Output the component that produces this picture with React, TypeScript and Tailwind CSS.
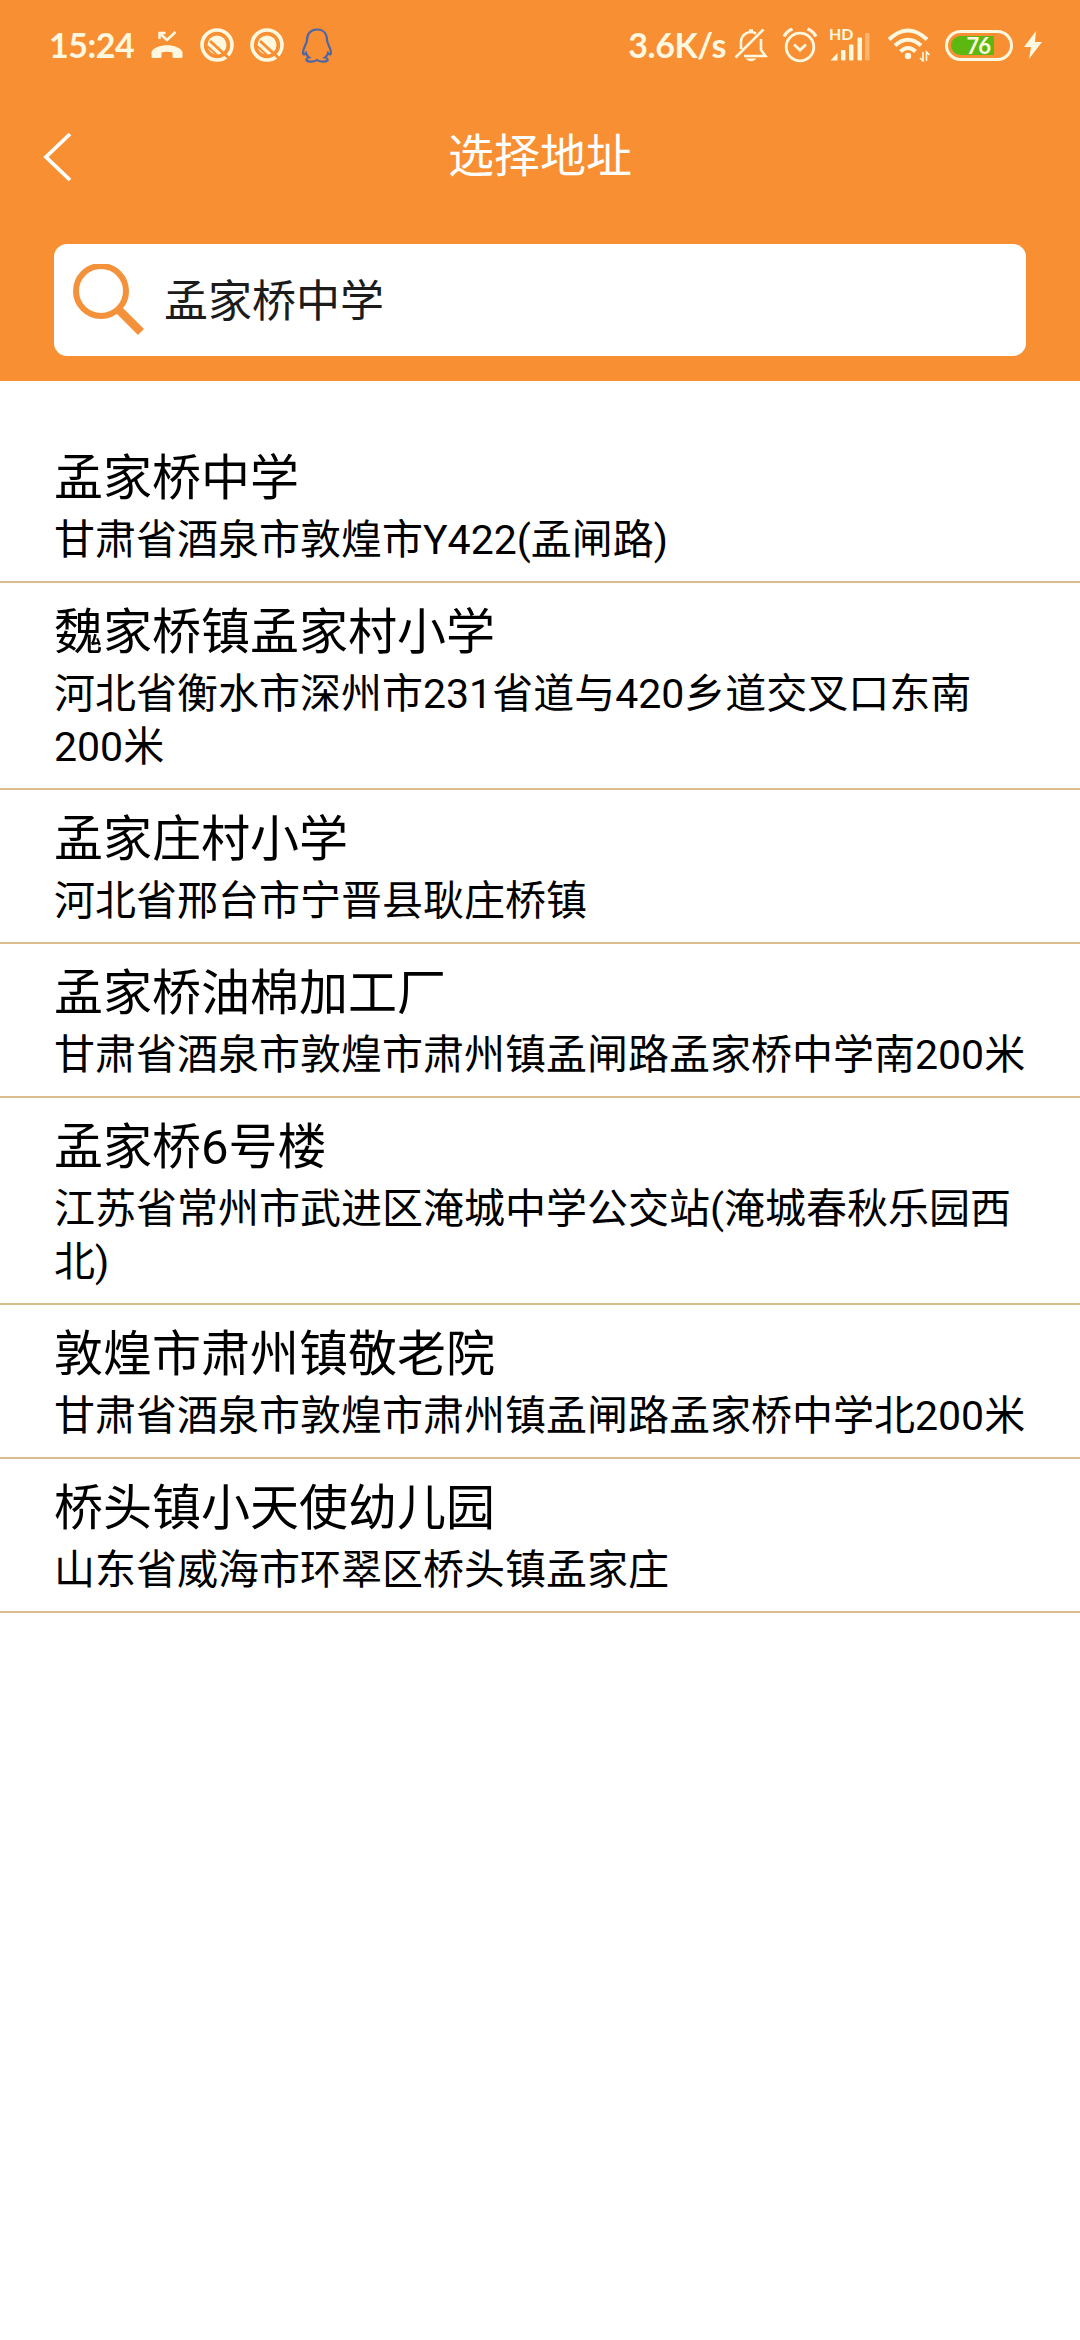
const addresses = [
  { name: '孟家桥中学', detail: '甘肃省酒泉市敦煌市Y422(孟闸路)' },
  { name: '魏家桥镇孟家村小学', detail: '河北省衡水市深州市231省道与420乡道交叉口东南200米' },
  { name: '孟家庄村小学', detail: '河北省邢台市宁晋县耿庄桥镇' },
  { name: '孟家桥油棉加工厂', detail: '甘肃省酒泉市敦煌市肃州镇孟闸路孟家桥中学南200米' },
  { name: '孟家桥6号楼', detail: '江苏省常州市武进区淹城中学公交站(淹城春秋乐园西北)' },
  { name: '敦煌市肃州镇敬老院', detail: '甘肃省酒泉市敦煌市肃州镇孟闸路孟家桥中学北200米' },
  { name: '桥头镇小天使幼儿园', detail: '山东省威海市环翠区桥头镇孟家庄' },
]

function MissedCallIcon() {
  return (
    <svg className="ml-[17px] h-[28px] w-[34px]" viewBox="0 0 34 28" fill="none">
      <path d="M9.500 1v7M8.500 2h7M10 2.500l7 6.500L25.500 1" stroke="currentColor" strokeWidth="2.500" />
      <path d="M1.500 21C5 12 29 12 32.500 21v4.500q0 1.500-1.500 1.500h-7q-1.500 0-1.500-1.500v-4q-5.500-1.500-11 0v4q0 1.500-1.500 1.500H3q-1.500 0-1.500-1.500z" fill="currentColor" />
    </svg>
  )
}

function NoSignIcon() {
  return (
    <svg className="ml-[16px] size-[34px]" viewBox="0 0 34 34" fill="none">
      <circle cx="17" cy="17" r="15" stroke="currentColor" strokeWidth="3.600" />
      <circle cx="17" cy="17" r="9.500" fill="currentColor" />
      <path d="M10 13L31 32" stroke="#f88f32" strokeWidth="3" />
      <path d="M7 18l10 9" stroke="#f88f32" strokeWidth="2" />
    </svg>
  )
}

function PenguinIcon() {
  return (
    <svg className="ml-[17px] h-[35px] w-[32px]" viewBox="0 0 32 35" fill="none">
      <path
        d="M16 1.500C9.500 1.500 6 6 6 12c0 4-4 7-4 13 0 2 1.500 2 3 0 .5 2 1.500 3.500 3 4.500-2 .5-3 1.500-2.500 3 2 1.500 8 1.500 10.500-.5 2.500 2 8.500 2 10.500.5.5-1.500-.5-2.500-2.500-3 1.500-1 2.500-2.500 3-4.500 1.500 2 3 2 3 0 0-6-4-9-4-13 0-6-3.500-10.500-10-10.500z"
        stroke="#4d66a8"
        strokeWidth="2.200"
      />
    </svg>
  )
}

function MutedBellIcon() {
  return (
    <svg className="ml-[8px] h-[34px] w-[34px]" viewBox="0 0 34 34" fill="none" stroke="currentColor" strokeWidth="2.600">
      <path d="M7 21V14a10 10 0 0 1 15-8.500M27 11v11l4.500 6H10" />
      <path d="M1.500 29.500L29.500 1.500" />
      <path d="M12.500 31q5 3.500 9 0z" fill="currentColor" strokeWidth="1" />
      <path d="M15 2.500h4" />
    </svg>
  )
}

function AlarmIcon() {
  return (
    <svg className="ml-[14px] h-[36px] w-[36px]" viewBox="0 0 36 36" fill="none" stroke="currentColor">
      <circle cx="18" cy="20" r="13.800" strokeWidth="2.800" />
      <path d="M12 17.500l6 5.500 6-5.500" strokeWidth="2.800" />
      <path d="M2 9.500Q5 4 10.500 2M34 9.500Q31 4 25.500 2" strokeWidth="3.400" />
    </svg>
  )
}

function SignalIcon() {
  return (
    <div className="relative ml-[11px] h-[34px] w-[42px]">
      <span className="absolute -top-[3px] left-0 text-[16px] leading-[18px]">HD</span>
      <svg className="size-full" viewBox="0 0 42 34" fill="currentColor">
        <path d="M1.500 32.500h7V25z" />
        <rect x="12" y="22" width="4.500" height="10.500" rx="1" />
        <rect x="20" y="16.500" width="4.500" height="16" rx="1" />
        <rect x="28.500" y="9.500" width="4.500" height="23" rx="1" />
        <rect x="36" y="5" width="4.500" height="27.500" rx="1" opacity=".35" />
      </svg>
    </div>
  )
}

function WifiIcon() {
  return (
    <svg className="ml-[16px] h-[34px] w-[43px]" viewBox="0 0 43 34" fill="none" stroke="currentColor">
      <path d="M2 11.500Q21 -6.500 40 11.500" strokeWidth="4" />
      <path d="M8 17.500Q21 6 34 17.500" strokeWidth="4" />
      <path d="M13.500 23.500Q21 16.500 28.500 23.500" strokeWidth="4" />
      <circle cx="21" cy="28" r="3.200" fill="currentColor" stroke="none" />
      <path d="M36 24v9l-3-3M39.500 33v-9l3 3" strokeWidth="1.600" />
    </svg>
  )
}

function StatusBar() {
  return (
    <div className="flex h-[90px] items-center pl-[49px] pr-[38px] font-['Lato',sans-serif] text-[34px] font-bold leading-none text-[#fff8e0]">
      <span className="w-[84px] whitespace-nowrap tracking-[-0.5px]">15:24</span>
      <MissedCallIcon />
      <NoSignIcon />
      <NoSignIcon />
      <PenguinIcon />
      <span className="ml-auto whitespace-nowrap tracking-[-0.4px]">3.6K/s</span>
      <MutedBellIcon />
      <AlarmIcon />
      <SignalIcon />
      <WifiIcon />
      <div className="ml-[15px] h-[31px] w-[68px] rounded-full border-[3px] border-current p-[3px]">
        <div className="relative h-full w-[43px] rounded-l-full bg-[#5cb811]">
          <span className="absolute -top-[3px] right-[4px] text-[22px] leading-[25px] tracking-[-1px]">76</span>
        </div>
      </div>
      <svg className="ml-[11px] h-[28px] w-[18px]" viewBox="0 0 18 28" fill="currentColor">
        <path d="M12 0L0 16h7L5 28 18 11h-7z" />
      </svg>
    </div>
  )
}

export default function App() {
  return (
    <div className="min-h-[2340px] w-[1080px] bg-white font-['Roboto','Noto_Sans_CJK_SC',sans-serif] text-black">
      <header className="h-[381px] bg-[#f88f32]">
        <StatusBar />
        <div className="grid h-[132px] grid-cols-[120px_1fr_120px] items-center text-white">
          <svg className="ml-[43px] mt-[2px] h-[50px] w-[30px]" viewBox="0 0 30 50" fill="none" stroke="currentColor" strokeWidth="3.800">
            <path d="M27 2L3 25l24 23" />
          </svg>
          <h1 className="text-center text-[46px] font-normal">选择地址</h1>
        </div>

        {/* Search box */}
        <div className="mx-[54px] mt-[22px] flex h-[112px] items-center rounded-[13px] bg-white">
          <svg className="ml-[18px] h-[72px] w-[72px]" viewBox="0 0 72 72" fill="none" stroke="#f4923b">
            <circle cx="29" cy="27" r="25" strokeWidth="6" />
            <path d="M46 45L69 68" strokeWidth="8.500" />
          </svg>
          <span className="ml-[20px] mt-[3px] text-[44px] leading-[60px] text-[#1c1c1c]">孟家桥中学</span>
        </div>
      </header>

      {/* Results */}
      <ul className="pt-[48px]">
        {addresses.map((item) => (
          <li key={item.name} className="border-b-2 border-[#dbbd8d] px-[54px] pb-[14px] pt-[15px]">
            <div className="h-[70px] text-[49px] leading-[70px]">{item.name}</div>
            <div className="text-[41px] leading-[53px]">{item.detail}</div>
          </li>
        ))}
      </ul>
    </div>
  )
}
